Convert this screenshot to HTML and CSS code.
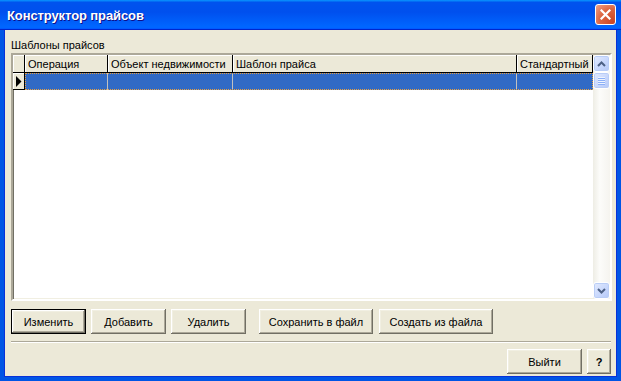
FILE: index.html
```html
<!DOCTYPE html>
<html lang="ru">
<head>
    <meta charset="UTF-8">
    <title>Конструктор прайсов</title>
    <link rel="stylesheet" href="styles.css">
</head>
<body>
    <div class="window">
        <div class="titlebar">
            <span class="title">Конструктор прайсов</span>
            <div class="close">
                <svg width="11" height="11" viewBox="0 0 11 11">
                    <path d="M1.5 1.5 L9.5 9.5 M9.5 1.5 L1.5 9.5" stroke="#fff" stroke-width="2.2" stroke-linecap="square"/>
                </svg>
            </div>
        </div>

        <div class="client">
            <div class="group-label">Шаблоны прайсов</div>

            <div class="grid">
                <div class="grid-data">
                    <div class="row head">
                        <div class="cell ind"></div>
                        <div class="cell">Операция</div>
                        <div class="cell">Объект недвижимости</div>
                        <div class="cell">Шаблон прайса</div>
                        <div class="cell">Стандартный</div>
                    </div>
                    <div class="row selected">
                        <div class="cell ind">
                            <svg width="6" height="11" viewBox="0 0 6 11"><polygon points="0,0 5.5,5.5 0,11" fill="#000"/></svg>
                        </div>
                        <div class="sel-cells">
                            <div class="cell"></div>
                            <div class="cell"></div>
                            <div class="cell"></div>
                            <div class="cell"></div>
                        </div>
                    </div>
                </div>
                <div class="scrollbar">
                    <div class="sb-btn">
                        <svg width="9" height="6" viewBox="0 0 9 6"><path d="M1 5 L4.5 1.5 L8 5" fill="none" stroke="#4d6185" stroke-width="2"/></svg>
                    </div>
                    <div class="sb-thumb">
                        <span></span><span></span><span></span><span></span>
                    </div>
                    <div class="sb-track"></div>
                    <div class="sb-btn">
                        <svg width="9" height="6" viewBox="0 0 9 6"><path d="M1 1 L4.5 4.5 L8 1" fill="none" stroke="#4d6185" stroke-width="2"/></svg>
                    </div>
                </div>
            </div>

            <div class="actions">
                <button class="btn default">Изменить</button>
                <button class="btn">Добавить</button>
                <button class="btn">Удалить</button>
                <button class="btn wide first-wide">Сохранить в файл</button>
                <button class="btn wide">Создать из файла</button>
            </div>

            <div class="separator"></div>

            <div class="footer">
                <button class="btn">Выйти</button>
                <button class="btn small">?</button>
            </div>
        </div>
    </div>
</body>
</html>
```

FILE: styles.css
```css
body {
    margin: 0;
    font-family: "Liberation Sans", Arial, sans-serif;
    font-size: 11px;
    background: #ece9d8;
}

.window {
    width: 621px;
    height: 381px;
    display: flex;
    flex-direction: column;
}

.titlebar {
    height: 30px;
    flex: none;
    display: flex;
    align-items: center;
    justify-content: space-between;
    padding: 0 5px 0 7px;
    box-sizing: border-box;
    background: linear-gradient(180deg, #0997ff, #0053ee 8%, #0050ee 40%, #0066ff 88%, #0066ff 93%, #005bff 95%, #0026cd 96%, #0026cd);
}

.title {
    color: #fff;
    font-weight: bold;
    font-size: 13px;
    text-shadow: 1px 1px #0f1089;
    letter-spacing: -0.1px;
}

.close {
    width: 19px;
    height: 19px;
    border: 1px solid #fff;
    border-radius: 3px;
    display: flex;
    align-items: center;
    justify-content: center;
    background: radial-gradient(circle at 90% 90%, #cc4625 0%, #dc6541 55%, #f0a38a 100%);
    margin-top: -1px;
}

.client {
    flex: 1;
    display: flex;
    flex-direction: column;
    background: #ece9d8;
    border: 4px solid #0055e5;
    border-top: none;
    box-shadow: inset 1px 0 #0831d9, inset -1px 0 #0831d9, inset 0 -1px #0831d9;
    padding: 7px 5px 3px 7px;
}

.group-label {
    line-height: 16px;
    height: 16px;
    color: #000;
}

.grid {
    height: 248px;
    display: flex;
    box-sizing: border-box;
    border: 2px solid;
    border-color: #aca899 #fff #fff #aca899;
    box-shadow: inset 1px 1px #716f64, inset -1px -1px #f1efe2;
    padding: 1px;
    background: #fff;
}

.grid-data {
    flex: 1;
    margin: -1px 0 0 -1px;
}

.row {
    display: flex;
    height: 18px;
}

.cell {
    box-sizing: border-box;
    height: 100%;
    padding-left: 3px;
    display: flex;
    align-items: center;
    white-space: nowrap;
    overflow: hidden;
}

.row > .cell:nth-child(1), .cell.ind { width: 12px; }
.row > .cell:nth-child(2), .sel-cells > .cell:nth-child(1) { width: 83px; }
.row > .cell:nth-child(3), .sel-cells > .cell:nth-child(2) { width: 125px; }
.row > .cell:nth-child(4), .sel-cells > .cell:nth-child(3) { width: 284px; }
.row > .cell:nth-child(5), .sel-cells > .cell:nth-child(4) { width: 76px; }

.head .cell {
    background: #ece9d8;
    border-right: 1px solid #000;
    border-bottom: 1px solid #000;
    box-shadow: inset 1px 1px #fff;
}

.selected {
    height: 17px;
}

.selected .cell.ind {
    background: #ece9d8;
    border-right: 1px solid #000;
    border-bottom: 1px solid #000;
    box-shadow: inset 1px 1px #fff;
    padding-left: 3px;
}

.sel-cells {
    display: flex;
    background: #316ac5;
    outline: 1px dotted #e8a040;
    outline-offset: -1px;
}

.sel-cells .cell {
    border-right: 1px solid #c0c0c0;
}

.sel-cells .cell:last-child {
    border-right: none;
}

.scrollbar {
    width: 17px;
    display: flex;
    flex-direction: column;
    background: linear-gradient(90deg, #eeede5, #fcfcfa 40%, #f5f4ef);
    margin: -1px -1px -1px 0;
}

.sb-btn, .sb-thumb {
    height: 17px;
    box-sizing: border-box;
    border: 1px solid #fff;
    border-radius: 3px;
    background: linear-gradient(135deg, #e3ebfe, #c6d6fc 60%, #b4c8f6);
    box-shadow: inset 0 0 0 1px #b9cdf6;
    display: flex;
    align-items: center;
    justify-content: center;
}

.sb-thumb {
    flex-direction: column;
    gap: 1px;
}

.sb-thumb span {
    display: block;
    width: 7px;
    height: 1px;
    background: #eef4fe;
    box-shadow: 0 1px #8cb0f8;
}

.sb-track {
    flex: 1;
}

.actions {
    display: flex;
    gap: 5px;
    margin-top: 8px;
    height: 25px;
}

.btn {
    width: 75px;
    height: 25px;
    padding: 0;
    font-family: "Liberation Sans", Arial, sans-serif;
    font-size: 11px;
    color: #000;
    background: #ece9d8;
    border: none;
    box-shadow: inset -1px -1px #716f64, inset 1px 1px #fff, inset -2px -2px #aca899, inset 2px 2px #f1efe2;
}

.btn.default {
    border: 1px solid #000;
}

.btn.wide {
    width: 114px;
    margin-left: 1px;
}

.btn.first-wide {
    margin-left: 8px;
}

.btn.small {
    width: 24px;
    font-weight: bold;
}

.separator {
    margin: 7px 1px 0 0;
    height: 1px;
    border-bottom: 1px solid #fff;
    background: #aca899;
}

.footer {
    display: flex;
    justify-content: flex-end;
    gap: 5px;
    margin: 6px 1px 0 0;
}
```
